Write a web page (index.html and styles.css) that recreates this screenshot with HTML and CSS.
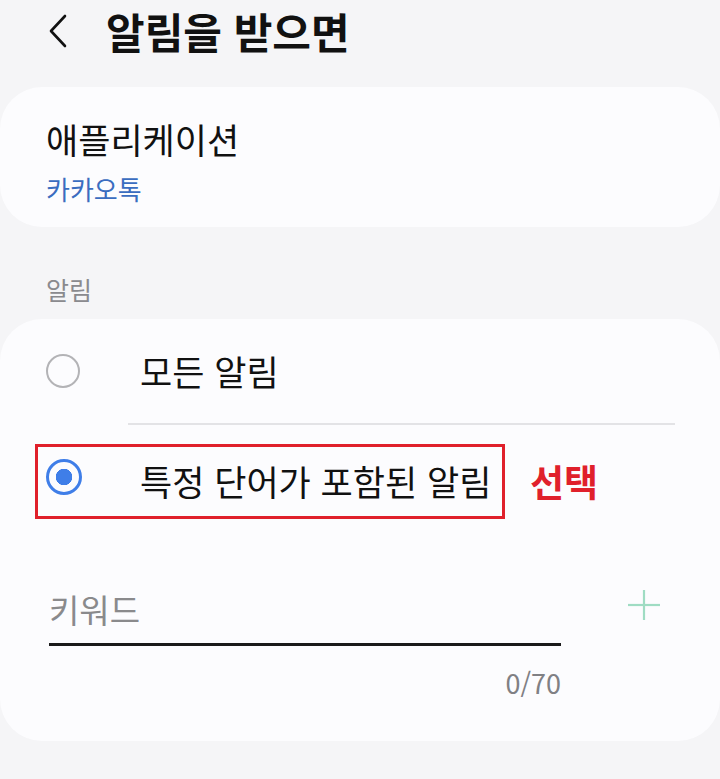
FILE: index.html
```html
<!DOCTYPE html>
<html lang="ko">
<head>
    <meta charset="UTF-8">
    <meta name="viewport" content="width=device-width, initial-scale=1.0">
    <title>알림을 받으면</title>
    <link rel="stylesheet" href="styles.css">
</head>
<body>
    <div class="topbar">
        <svg class="back" width="20" height="34" viewBox="0 0 20 34">
            <polyline points="17,2 3,17 17,32" fill="none" stroke="#111" stroke-width="2.6" stroke-linecap="round" stroke-linejoin="round"/>
        </svg>
        <h1>알림을 받으면</h1>
    </div>

    <div class="card app">
        <p class="app-title">애플리케이션</p>
        <p class="app-name">카카오톡</p>
    </div>

    <p class="label">알림</p>

    <div class="card options">
        <div class="row first">
            <span class="radio"></span>
            <span class="option-text">모든 알림</span>
        </div>
        <div class="divider"></div>
        <div class="row second">
            <div class="marked">
                <span class="radio checked"></span>
                <span class="option-text">특정 단어가 포함된 알림</span>
            </div>
            <span class="note">선택</span>
        </div>

        <div class="keyword">
            <div class="field">키워드</div>
            <svg class="plus" width="34" height="32" viewBox="0 0 34 32">
                <line x1="17" y1="1" x2="17" y2="31" stroke="#9fdcc3" stroke-width="2.2"/>
                <line x1="1" y1="16" x2="33" y2="16" stroke="#9fdcc3" stroke-width="2.2"/>
            </svg>
        </div>
        <p class="count">0/70</p>
    </div>
</body>
</html>
```

FILE: styles.css
```css
body {
    margin: 0;
    background: #f5f5f7;
    font-family: "Noto Sans CJK KR", "Noto Sans", sans-serif;
    color: #111;
}

p {
    margin: 0;
}

.topbar {
    height: 62px;
    display: flex;
    align-items: center;
    padding-left: 48px;
}

.back {
    margin-right: 38px;
}

h1 {
    margin: 0;
    font-size: 42px;
    font-weight: bold;
    line-height: 50px;
}

.card {
    background: #fcfcfe;
    border-radius: 42px;
}

.app {
    margin-top: 25px;
    height: 140px;
    box-sizing: border-box;
    padding: 30px 46px 0;
}

.app-title {
    font-size: 35px;
    line-height: 44px;
}

.app-name {
    margin-top: 12px;
    font-size: 26px;
    line-height: 32px;
    color: #3a6dc0;
}

.label {
    margin: 46px 0 14px 46px;
    font-size: 25px;
    line-height: 32px;
    color: #8a8a8e;
}

.options {
    height: 422px;
    box-sizing: border-box;
    padding-top: 0;
}

.row {
    display: flex;
    align-items: center;
}

.row.first {
    height: 104px;
    padding-left: 46px;
}

.divider {
    height: 2px;
    background: #e3e3e6;
    margin: 0 45px 0 128px;
}

.row.second {
    height: 112px;
    padding-left: 35px;
}

.marked {
    display: flex;
    align-items: center;
    width: 470px;
    height: 75px;
    box-sizing: border-box;
    border: 3px solid #e0202b;
    padding-left: 8px;
}

.radio {
    width: 34px;
    height: 34px;
    box-sizing: border-box;
    border: 2.5px solid #b3b3b6;
    border-radius: 50%;
    margin-right: 60px;
    flex-shrink: 0;
}

.radio.checked {
    width: 36px;
    height: 36px;
    margin-right: 58px;
    margin-bottom: 8px;
    border: 3.5px solid #3f7ee8;
    background: radial-gradient(circle, #3f7ee8 0 8px, transparent 8.5px);
}

.option-text {
    font-size: 35px;
    line-height: 44px;
}

.note {
    margin-left: 25px;
    font-size: 37px;
    font-weight: bold;
    color: #e0202b;
}

.keyword {
    display: flex;
    align-items: flex-start;
    margin-top: 52px;
    padding-left: 49px;
}

.field {
    width: 512px;
    font-size: 33px;
    line-height: 40px;
    color: #8a8a8c;
    padding-bottom: 14px;
    border-bottom: 3px solid #1a1a1a;
}

.plus {
    margin: 0 0 0 66px;
}

.count {
    width: 561px;
    text-align: right;
    margin-top: 22px;
    font-size: 27px;
    line-height: 30px;
    color: #808084;
}
```
